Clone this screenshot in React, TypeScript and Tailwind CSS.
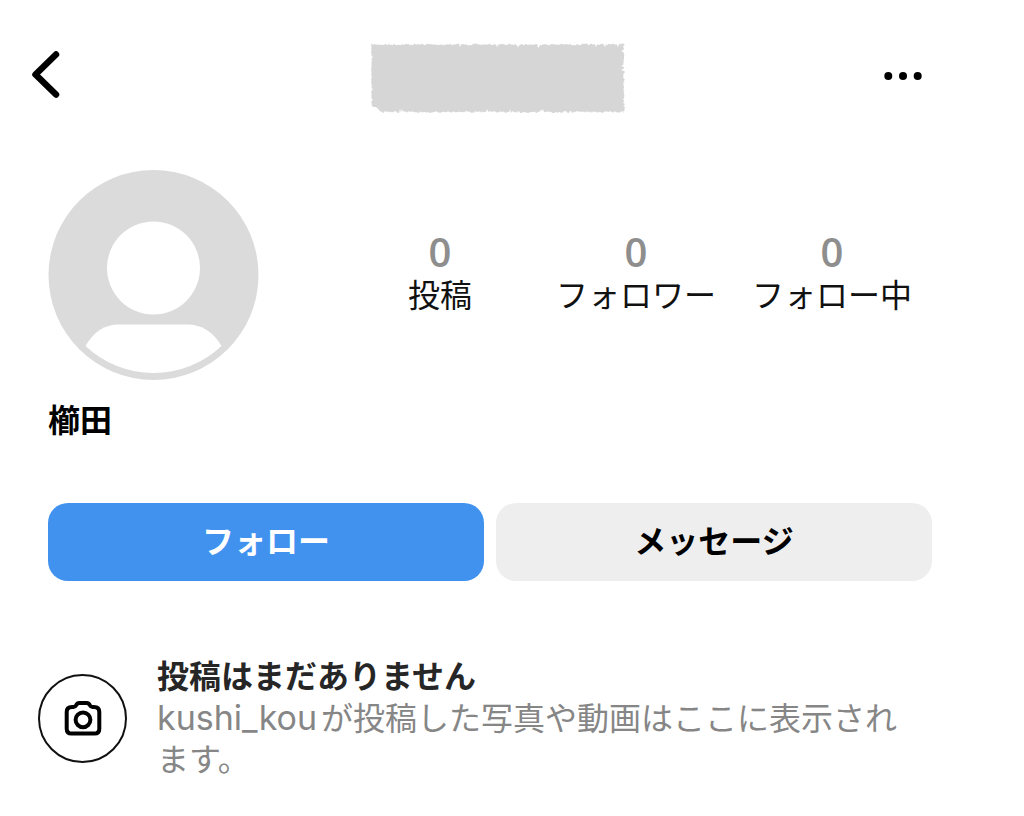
const stats = [
  { label: "投稿", value: 0 },
  { label: "フォロワー", value: 0 },
  { label: "フォロー中", value: 0 },
];

// rough outline for the painted-over user name, uneven by a few pixels on each side
function roughOutline(width: number, height: number) {
  let seed = 7;
  const jag = () => {
    seed = (seed * 16807) % 2147483647;
    const r = seed / 2147483647;
    return r > 0.96 ? 4 : r * 2;
  };
  const points: string[] = [];
  for (let x = 1; x < width; x += 1) points.push(`${x},${(jag() + 0.5).toFixed(1)}`);
  for (let y = 1; y < height; y += 1) points.push(`${(width - jag()).toFixed(1)},${y}`);
  for (let x = width - 1; x > 9; x -= 1) points.push(`${x},${(height - jag()).toFixed(1)}`);
  points.push(`7,${height - 4}`, `5,${height - 6}`, `2,${height - 6}`);
  for (let y = height - 8; y > 0; y -= 1) points.push(`${(jag() / 2).toFixed(1)},${y}`);
  return points.join(" ");
}

function Header() {
  return (
    <header className="grid grid-cols-[1fr_auto_1fr] items-center pl-8 pr-[60px]">
      <button type="button" aria-label="戻る" className="-mt-2 justify-self-start">
        <svg width="28" height="48" viewBox="0 0 28 48" fill="none">
          <path
            d="M24 4.500 3.500 24.500 24 44.500"
            stroke="#000"
            strokeWidth="6.500"
            strokeLinecap="round"
            strokeLinejoin="round"
          />
        </svg>
      </button>
      <svg width="254" height="70" viewBox="0 0 254 70" aria-hidden="true">
        <polygon points={roughOutline(254, 70)} fill="#d6d6d6" />
      </svg>
      <button type="button" aria-label="その他" className="mr-[42px] -mt-1 justify-self-end">
        <svg width="38" height="10" viewBox="0 0 38 10">
          <circle cx="4.3" cy="5" r="4" />
          <circle cx="19" cy="5" r="4" />
          <circle cx="33.7" cy="5" r="4" />
        </svg>
      </button>
    </header>
  );
}

function Avatar() {
  return (
    <svg width="211" height="211" viewBox="0 0 211 211" className="shrink-0" aria-hidden="true">
      <circle cx="105.5" cy="105" r="105" fill="#dbdbdb" />
      <circle cx="105.5" cy="98" r="46.5" fill="#fff" />
      <path
        d="M37.500 176C45.500 162 56.500 154.500 70.500 154.500H139.500C153.500 154.500 165.500 162 173.500 176A99 99 0 0 1 37.500 176Z"
        fill="#fff"
      />
    </svg>
  );
}

function CameraIcon() {
  return (
    <svg width="38" height="36" viewBox="0 0 38 36" fill="none" stroke="#000" strokeWidth="4">
      <path
        d="M8 7H9.500C11 7 11.600 6.200 12.300 5C13 3.600 13.800 3 15.200 3H22.800C24.200 3 25 3.600 25.700 5C26.400 6.200 27 7 28.500 7H30C33.500 7 35.300 8.800 35.300 12V28.800C35.300 32 33.500 33.600 30.500 33.600H7.500C4.500 33.600 2.700 32 2.700 28.800V12C2.700 8.800 4.500 7 8 7Z"
        strokeLinejoin="round"
      />
      <circle cx="19" cy="19.800" r="7.400" />
    </svg>
  );
}

export default function App() {
  return (
    <div className="min-h-screen bg-white pt-[43px] font-['Inter','Noto_Sans_CJK_JP',sans-serif] text-black">
      <Header />
      <main className="pl-12 pr-[92px]">
        <section className="mt-[57px] flex items-center pr-0.5">
          <Avatar />
          <dl className="ml-[83px] grid flex-1 grid-cols-3 pb-1 text-center">
            {stats.map((stat) => (
              <div key={stat.label} className="flex flex-col-reverse">
                <dt className="whitespace-nowrap text-[32px] leading-[44px] text-[#111]">{stat.label}</dt>
                <dd className="font-['Open_Sans',sans-serif] text-[40px] font-semibold leading-[44px] text-[#8e8e8e]">
                  {stat.value}
                </dd>
              </div>
            ))}
          </dl>
        </section>

        <h1 className="mt-[19px] text-[32px] font-bold leading-[41px]">櫛田</h1>

        <div className="mt-[62px] grid grid-cols-2 gap-3 text-[32px] font-bold">
          <button type="button" className="h-[78px] rounded-[20px] bg-[#4192ef] text-white">
            フォロー
          </button>
          <button type="button" className="h-[78px] rounded-[20px] bg-[#eeeeee]">
            メッセージ
          </button>
        </div>

        <section className="-ml-[10px] mt-[75px] flex items-center gap-[30px]">
          <div className="flex size-[89px] shrink-0 items-center justify-center rounded-full border-2 border-[#111]">
            <CameraIcon />
          </div>
          <div className="pr-4 text-[32px] leading-[41px]">
            <h2 className="font-bold text-[#262626]">投稿はまだありません</h2>
            <p className="text-[#868686]">
              <span className="mr-1 text-[34px]">kushi_kou</span>が投稿した写真や動画はここに表示されます。
            </p>
          </div>
        </section>
      </main>
    </div>
  );
}
